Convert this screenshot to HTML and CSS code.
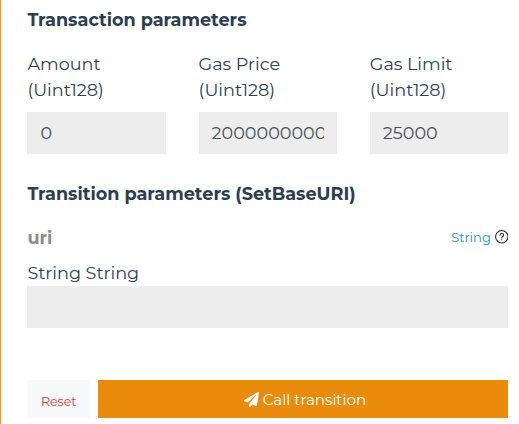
FILE: index.html
```html
<!DOCTYPE html>
<html lang="en">
<head>
<meta charset="utf-8">
<title>Call transition</title>
<link rel="stylesheet" href="styles.css">
</head>
<body>
<main class="panel">
  <h2 class="heading">Transaction parameters</h2>
  <div class="fields">
    <label class="field"><span class="label">Amount<br>(Uint128)</span><input class="input" value="0"></label>
    <label class="field"><span class="label">Gas Price<br>(Uint128)</span><input class="input" value="2000000000"></label>
    <label class="field"><span class="label">Gas Limit<br>(Uint128)</span><input class="input" value="25000"></label>
  </div>
  <h2 class="heading second">Transition parameters (SetBaseURI)</h2>
  <div class="param">
    <span class="name">uri</span>
    <span class="type">String
      <svg class="help" viewBox="0 0 14 14" fill="none" stroke="#222" stroke-linecap="round"><circle cx="7" cy="7" r="6.4" stroke-width="1.1"/><path d="M5.1 5.4C5.1 4.2 6 3.6 7 3.6S8.9 4.3 8.9 5.3C8.9 6.7 7 6.7 7 8.1" stroke-width="1.1"/><circle cx="7" cy="10.1" r=".7" fill="#222" stroke="none"/></svg>
    </span>
  </div>
  <label class="wide">String String<input class="input"></label>
  <div class="actions">
    <button class="reset">Reset</button>
    <button class="call"><svg class="plane" viewBox="0 0 512 512" fill="#fff"><path d="M476 3.200L12.500 270.600c-18.100 10.400-15.800 35.600 2.200 43.200L121 358.400l287.300-253.200c5.500-4.900 13.300 2.600 8.600 8.300L176 407v80.500c0 23.600 28.500 32.900 42.500 15.800L282 426l124.600 52.200c14.200 6 30.400-2.900 33-18.200l72-432C515 7.800 493.300-6.800 476 3.200z"/></svg><span>Call transition</span></button>
  </div>
</main>
</body>
</html>
```
FILE: styles.css
```css
* { box-sizing: border-box; }
body {
  margin: 0;
  background: #fff;
  color: #2c3e50;
  font: 17.6px/26px Montserrat, Inter, sans-serif;
}
.panel {
  height: 424px;
  overflow: hidden;
  border-left: 1px solid #ff9800;
  padding: 7px 11px 0 26.4px;
  white-space: nowrap;
}
.heading { margin: 0; font-size: 17.65px; font-weight: 700; line-height: 26px; }
.fields { display: grid; grid-template-columns: repeat(3, 1fr); gap: 33px; margin-top: 18px; }
.field { min-width: 0; }
.label { display: block; margin-bottom: 9px; }
.input {
  display: block;
  width: 100%;
  height: 42px;
  border: 0;
  border-radius: 0;
  padding: 0 13px 2px;
  background: #ededed;
  color: #495057;
  font: 400 17.6px Montserrat, Inter, sans-serif;
}
.second { margin-top: 27px; }
.param { display: flex; justify-content: space-between; align-items: center; height: 26px; margin-top: 18px; }
.name { color: #8c8c8c; font-weight: 700; }
.type { display: flex; align-items: center; gap: 4px; margin: -2px -0.4px 0 0; color: #1e87f0; font-size: 13px; }
.help { width: 13.6px; height: 13.6px; }
.wide { display: block; margin-top: 9px; }
.actions { display: flex; gap: 8px; margin-top: 52px; }
button { border: 0; padding: 0; height: 38px; font-family: Montserrat, Inter, sans-serif; }
.reset { width: 62.6px; padding-top: 4px; background: #f8f9fa; color: #dc3545; font-size: 12.6px; }
.call { flex: 1; display: flex; align-items: center; justify-content: center; gap: 4px; padding: 1px 0 0 4px; background: #eb8b0c; color: #fff; font-size: 15.1px; }
.plane { width: 15px; height: 15px; }
```
